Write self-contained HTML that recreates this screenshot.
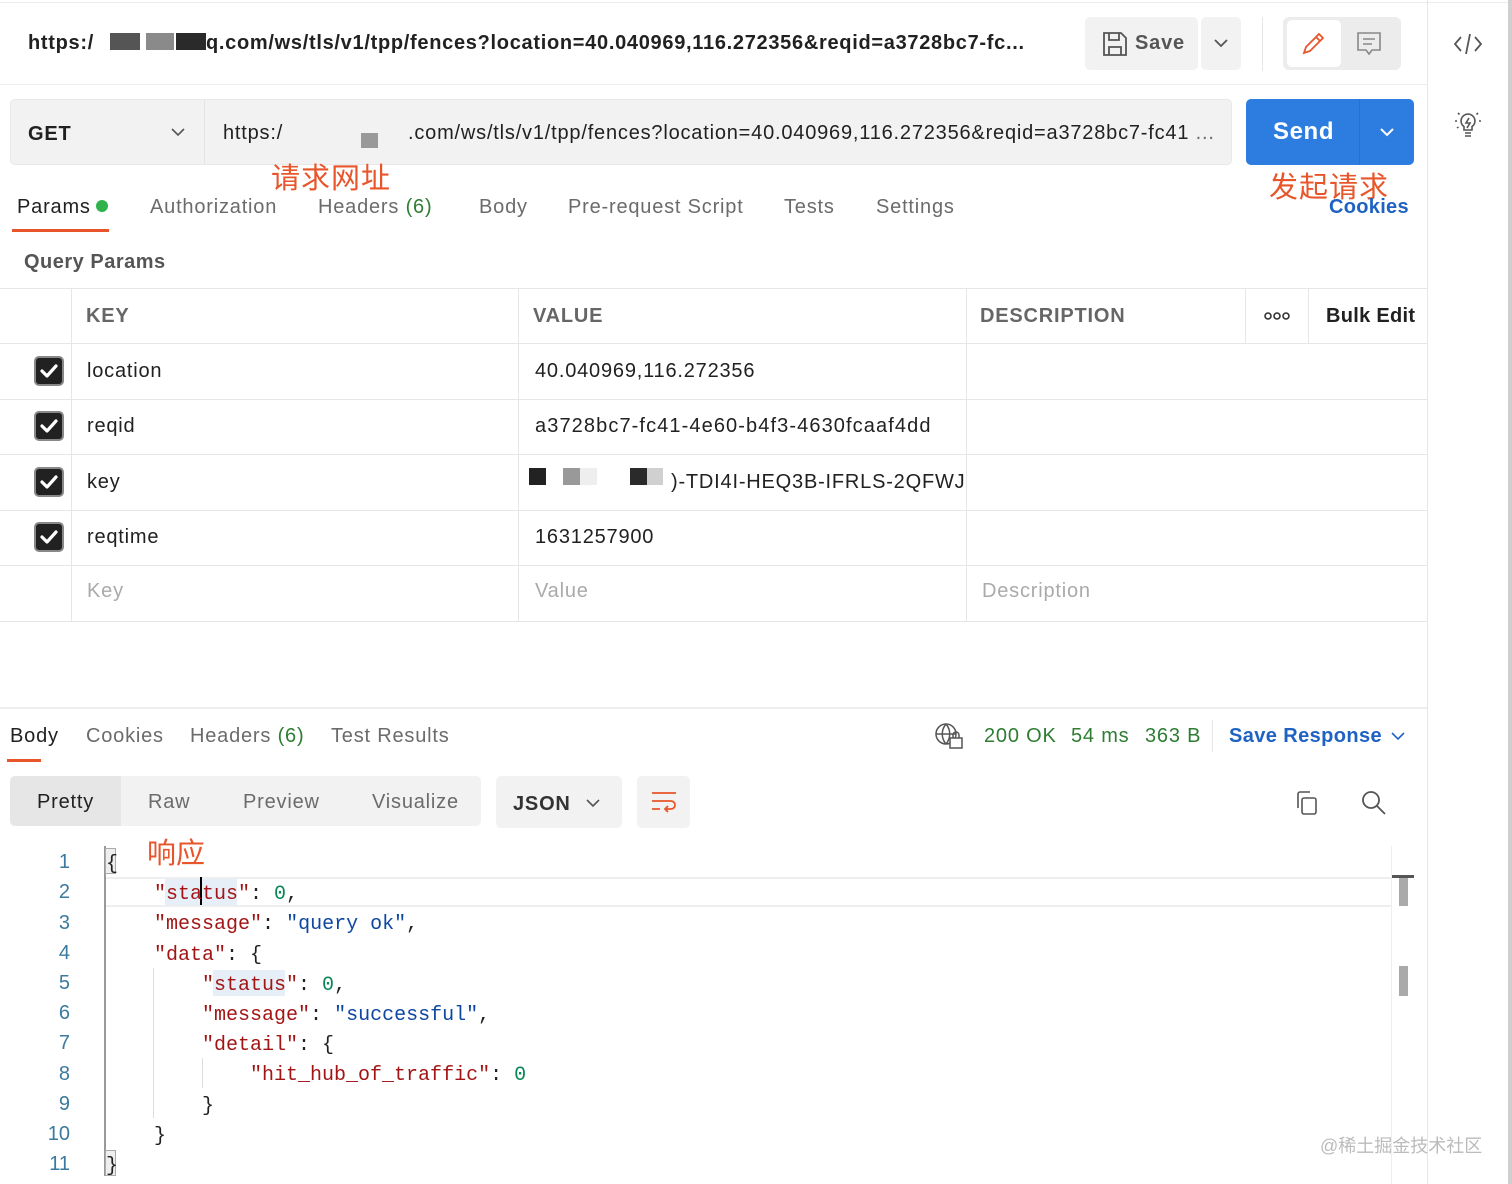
<!DOCTYPE html>
<html><head><meta charset="utf-8">
<style>
*{box-sizing:border-box;margin:0;padding:0}
body{width:1512px;height:1184px;background:#fff;font-family:"Liberation Sans","Noto Sans CJK SC",sans-serif;color:#212121;position:relative;overflow:hidden}
.a{position:absolute}
.t{font-size:20px;white-space:nowrap;letter-spacing:0.8px}
.g{color:#6b6b6b}
.cjk{font-family:"Noto Sans CJK SC","WenQuanYi Zen Hei",sans-serif;color:#e8552a;font-size:29px}
.vl{position:absolute;background:#e6e6e6;width:1px}
.hz{position:absolute;background:#e6e6e6;height:1px}
.cb{position:absolute;left:34px;width:30px;height:30px;border-radius:5px;background:#212121;border:2px solid #888}
.code{font-family:"Liberation Mono",monospace;font-size:20px;white-space:pre}
.k{color:#a31515}.s{color:#0d47a1}.n{color:#098658}
.ln{position:absolute;width:70px;text-align:right;color:#3b7a9e;font-size:20px;left:0}
</style></head><body>
<div class="hz" style="top:2px;left:0;width:1508px;background:#ececec"></div>
<div class="a" style="left:1508px;top:0;width:4px;height:1184px;background:#cfcfcf"></div>
<div class="vl" style="left:1427px;top:0;height:1184px"></div>
<svg class="a" style="left:1453px;top:31px" width="30" height="26" viewBox="0 0 30 26" fill="none" stroke="#555" stroke-width="1.8"><path d="M8 6 2 13l6 7M22 6l6 7-6 7M17 3l-4 20"/></svg>
<svg class="a" style="left:1452px;top:108px" width="32" height="32" viewBox="0 0 32 32" fill="none" stroke="#555" stroke-width="1.6"><path d="M16 6a7 7 0 0 0-4 12.7V22h8v-3.3A7 7 0 0 0 16 6zM13 25h6M13 28h6M17 10l-3 5h4l-3 5M3 13h2M27 13h2M6 5l1.5 1.5M26 5l-1.5 1.5M5 20l1.5-1"/></svg>

<div class="a t" style="left:28px;top:32px;font-weight:bold;letter-spacing:0.7px">https:/</div>
<div class="a" style="left:110px;top:33px;width:30px;height:17px;background:#555"></div>
<div class="a" style="left:146px;top:33px;width:28px;height:17px;background:#8a8a8a"></div>
<div class="a" style="left:176px;top:33px;width:30px;height:17px;background:#2a2a2a"></div>
<div class="a t" style="left:206px;top:32px;font-weight:bold;letter-spacing:0.7px">q.com/ws/tls/v1/tpp/fences?location=40.040969,116.272356&amp;reqid=a3728bc7-fc...</div>
<div class="a" style="left:1085px;top:17px;width:113px;height:53px;background:#f2f2f2;border-radius:5px"></div>
<div class="a" style="left:1201px;top:17px;width:40px;height:53px;background:#f2f2f2;border-radius:5px"></div>
<svg class="a" style="left:1102px;top:31px" width="26" height="26" viewBox="0 0 26 26" fill="none" stroke="#555" stroke-width="1.8"><path d="M2 2h17l5 5v17H2z M7 2v7h10V2 M7 24v-8h12v8"/></svg>
<div class="a t" style="left:1135px;top:32px;font-weight:bold;color:#555">Save</div>
<svg class="a" style="left:1213px;top:38px" width="16" height="10" viewBox="0 0 16 10" fill="none" stroke="#555" stroke-width="1.8"><path d="M2 2l6 6 6-6"/></svg>
<div class="vl" style="left:1262px;top:17px;height:54px"></div>
<div class="a" style="left:1283px;top:17px;width:118px;height:53px;background:#ececec;border-radius:6px"></div>
<div class="a" style="left:1287px;top:20px;width:54px;height:47px;background:#fff;border-radius:5px"></div>
<svg class="a" style="left:1301px;top:30px" width="26" height="26" viewBox="0 0 26 26" fill="none" stroke="#e8552a" stroke-width="1.8"><path d="M3 23l2-6L18 4l4 4L9 21z M15 7l4 4"/></svg>
<svg class="a" style="left:1356px;top:31px" width="26" height="26" viewBox="0 0 26 26" fill="none" stroke="#888" stroke-width="1.6"><path d="M2 2h22v17H16l-3 4-3-4H2z M7 8h12M7 13h9"/></svg>
<div class="hz" style="top:84px;left:0;width:1427px;background:#ededed"></div>

<div class="a" style="left:10px;top:99px;width:1222px;height:66px;background:#f2f2f2;border-radius:5px;border:1px solid #e8e8e8"></div>
<div class="vl" style="left:204px;top:100px;height:64px;background:#e3e3e3"></div>
<div class="a t" style="left:28px;top:123px;font-weight:bold">GET</div>
<svg class="a" style="left:170px;top:127px" width="16" height="10" viewBox="0 0 16 10" fill="none" stroke="#555" stroke-width="1.6"><path d="M2 2l6 6 6-6"/></svg>
<div class="a t" style="left:223px;top:122px">https:/</div>
<div class="a" style="left:361px;top:133px;width:17px;height:15px;background:#999"></div>
<div class="a t" style="left:408px;top:122px">.com/ws/tls/v1/tpp/fences?location=40.040969,116.272356&amp;reqid=a3728bc7-fc41 <span class="g">...</span></div>
<div class="a" style="left:1246px;top:99px;width:168px;height:66px;background:#2d7ce0;border-radius:5px"></div>
<div class="a" style="left:1359px;top:99px;width:1px;height:66px;background:#2a6fca"></div>
<div class="a" style="left:1273px;top:118px;color:#fff;font-weight:bold;font-size:24px;letter-spacing:0.6px">Send</div>
<svg class="a" style="left:1379px;top:127px" width="16" height="10" viewBox="0 0 16 10" fill="none" stroke="#fff" stroke-width="2"><path d="M2 2l6 6 6-6"/></svg>
<div class="a cjk" style="left:271px;top:155px;letter-spacing:1px">请求网址</div>
<div class="a cjk" style="left:1269px;top:164px;letter-spacing:1px">发起请求</div>
<div class="a t" style="left:1329px;top:196px;color:#1e63c4;font-weight:bold;letter-spacing:0.3px">Cookies</div>

<div class="a t" style="left:17px;top:196px">Params</div>
<div class="a" style="left:96px;top:200px;width:12px;height:12px;border-radius:6px;background:#2fb24c"></div>
<div class="a" style="left:12px;top:229px;width:97px;height:3px;background:#e8552a"></div>
<div class="a t g" style="left:150px;top:196px">Authorization</div>
<div class="a t g" style="left:318px;top:196px">Headers <span style="color:#2e7d32">(6)</span></div>
<div class="a t g" style="left:479px;top:196px">Body</div>
<div class="a t g" style="left:568px;top:196px">Pre-request Script</div>
<div class="a t g" style="left:784px;top:196px">Tests</div>
<div class="a t g" style="left:876px;top:196px">Settings</div>
<div class="a t" style="left:24px;top:251px;font-weight:bold;color:#555;letter-spacing:0.5px">Query Params</div>

<div class="hz" style="top:288px;left:0;width:1427px"></div>
<div class="hz" style="top:343px;left:0;width:1427px"></div>
<div class="hz" style="top:399px;left:0;width:1427px"></div>
<div class="hz" style="top:454px;left:0;width:1427px"></div>
<div class="hz" style="top:510px;left:0;width:1427px"></div>
<div class="hz" style="top:565px;left:0;width:1427px"></div>
<div class="hz" style="top:621px;left:0;width:1427px"></div>
<div class="vl" style="left:71px;top:288px;height:333px"></div>
<div class="vl" style="left:518px;top:288px;height:333px"></div>
<div class="vl" style="left:966px;top:288px;height:333px"></div>
<div class="vl" style="left:1245px;top:288px;height:55px"></div>
<div class="vl" style="left:1308px;top:288px;height:55px"></div>
<div class="a t" style="left:86px;top:305px;font-weight:bold;color:#666">KEY</div>
<div class="a t" style="left:533px;top:305px;font-weight:bold;color:#666">VALUE</div>
<div class="a t" style="left:980px;top:305px;font-weight:bold;color:#666">DESCRIPTION</div>
<svg class="a" style="left:1264px;top:311px" width="26" height="10" viewBox="0 0 26 10" fill="none" stroke="#333" stroke-width="1.6"><circle cx="4" cy="5" r="3"/><circle cx="13" cy="5" r="3"/><circle cx="22" cy="5" r="3"/></svg>
<div class="a t" style="left:1326px;top:305px;font-weight:bold;letter-spacing:0.3px">Bulk Edit</div>

<div class="cb" style="top:356px"></div><div class="cb" style="top:411px"></div><div class="cb" style="top:467px"></div><div class="cb" style="top:522px"></div>
<svg class="a" style="left:34px;top:356px" width="30" height="200" viewBox="0 0 30 200" fill="none" stroke="#fff" stroke-width="3.2" stroke-linecap="round" stroke-linejoin="round"><path d="M8 15l5 5 9-10M8 70l5 5 9-10M8 126l5 5 9-10M8 181l5 5 9-10"/></svg>

<div class="a t" style="left:87px;top:360px">location</div>
<div class="a t" style="left:535px;top:360px">40.040969,116.272356</div>
<div class="a t" style="left:87px;top:415px">reqid</div>
<div class="a t" style="left:535px;top:415px;letter-spacing:1.1px">a3728bc7-fc41-4e60-b4f3-4630fcaaf4dd</div>
<div class="a t" style="left:87px;top:471px">key</div>
<div class="a" style="left:529px;top:468px;width:17px;height:17px;background:#222"></div>
<div class="a" style="left:563px;top:468px;width:17px;height:17px;background:#999"></div>
<div class="a" style="left:580px;top:468px;width:17px;height:17px;background:#eee"></div>
<div class="a" style="left:630px;top:468px;width:17px;height:17px;background:#2a2a2a"></div>
<div class="a" style="left:647px;top:468px;width:16px;height:17px;background:#d0d0d0"></div>
<div class="a t" style="left:671px;top:471px">)-TDI4I-HEQ3B-IFRLS-2QFWJ</div>
<div class="a t" style="left:87px;top:526px">reqtime</div>
<div class="a t" style="left:535px;top:526px">1631257900</div>
<div class="a t" style="left:87px;top:580px;color:#aaa">Key</div>
<div class="a t" style="left:535px;top:580px;color:#aaa">Value</div>
<div class="a t" style="left:982px;top:580px;color:#aaa">Description</div>

<div class="hz" style="top:707px;left:0;width:1427px;height:2px;background:#eee"></div>
<div class="a t" style="left:10px;top:725px">Body</div>
<div class="a" style="left:7px;top:759px;width:34px;height:3px;background:#e8552a"></div>
<div class="a t g" style="left:86px;top:725px">Cookies</div>
<div class="a t g" style="left:190px;top:725px">Headers <span style="color:#2e7d32">(6)</span></div>
<div class="a t g" style="left:331px;top:725px">Test Results</div>
<svg class="a" style="left:934px;top:722px" width="30" height="28" viewBox="0 0 30 28" fill="none" stroke="#555" stroke-width="1.5"><circle cx="12" cy="12" r="10"/><path d="M2 12h20M12 2c-5 6-5 14 0 20M12 2c5 6 5 14 0 20"/><rect x="16" y="16" width="12" height="10" fill="#fff"/><path d="M19 16v-3a3 3 0 0 1 6 0v3"/></svg>
<div class="a t" style="left:984px;top:725px;color:#2e7d32">200 OK</div>
<div class="a t" style="left:1071px;top:725px;color:#2e7d32">54 ms</div>
<div class="a t" style="left:1145px;top:725px;color:#2e7d32">363 B</div>
<div class="vl" style="left:1212px;top:720px;height:32px"></div>
<div class="a t" style="left:1229px;top:725px;color:#1e63c4;font-weight:bold;letter-spacing:0.4px">Save Response</div>
<svg class="a" style="left:1390px;top:731px" width="16" height="10" viewBox="0 0 16 10" fill="none" stroke="#1e63c4" stroke-width="1.6"><path d="M2 2l6 6 6-6"/></svg>

<div class="a" style="left:10px;top:776px;width:471px;height:50px;background:#f2f2f2;border-radius:5px"></div>
<div class="a" style="left:10px;top:776px;width:111px;height:50px;background:#e6e6e6;border-radius:5px 0 0 5px"></div>
<div class="a t" style="left:37px;top:791px">Pretty</div>
<div class="a t g" style="left:148px;top:791px">Raw</div>
<div class="a t g" style="left:243px;top:791px">Preview</div>
<div class="a t g" style="left:372px;top:791px">Visualize</div>
<div class="a" style="left:496px;top:776px;width:126px;height:52px;background:#f2f2f2;border-radius:5px"></div>
<div class="a t" style="left:513px;top:793px;font-weight:bold;color:#333">JSON</div>
<svg class="a" style="left:585px;top:798px" width="16" height="10" viewBox="0 0 16 10" fill="none" stroke="#555" stroke-width="1.6"><path d="M2 2l6 6 6-6"/></svg>
<div class="a" style="left:637px;top:776px;width:53px;height:52px;background:#f2f2f2;border-radius:5px"></div>
<svg class="a" style="left:650px;top:790px" width="28" height="26" viewBox="0 0 28 26" fill="none" stroke="#e8552a" stroke-width="1.8"><path d="M2 3h24M2 11h19a4 4 0 0 1 0 8h-6M18 16l-3 3 3 3M2 19h8"/></svg>
<svg class="a" style="left:1293px;top:789px" width="28" height="28" viewBox="0 0 28 28" fill="none" stroke="#555" stroke-width="1.6"><rect x="9" y="9" width="14" height="16" rx="2"/><path d="M5 19V5a2 2 0 0 1 2-2h10"/></svg>
<svg class="a" style="left:1360px;top:789px" width="28" height="28" viewBox="0 0 28 28" fill="none" stroke="#555" stroke-width="1.8"><circle cx="11" cy="11" r="8"/><path d="M17 17l8 8"/></svg>
<div class="a cjk" style="left:147px;top:830px">响应</div>

<div class="vl" style="left:1391px;top:846px;height:338px;background:#eee"></div>
<div class="a" style="left:1392px;top:875px;width:22px;height:3px;background:#555"></div>
<div class="a" style="left:1399px;top:878px;width:9px;height:28px;background:#aaa"></div>
<div class="a" style="left:1399px;top:966px;width:9px;height:30px;background:#aaa"></div>
<div class="a" style="left:106px;top:877px;width:1285px;height:30px;border-top:2px solid #eee;border-bottom:2px solid #eee"></div>
<div class="vl" style="left:104px;top:846px;height:330px;background:#999;width:2px"></div>
<div class="vl" style="left:153px;top:968px;height:150px;background:#ddd"></div>
<div class="vl" style="left:202px;top:1058px;height:30px;background:#ddd"></div>
<div class="a" style="left:105px;top:848px;width:11px;height:26px;border:1px solid #aaa;background:#eee"></div>
<div class="a" style="left:105px;top:1150px;width:11px;height:26px;border:1px solid #aaa;background:#eee"></div>
<div class="a" style="left:165px;top:879px;width:72px;height:26px;background:#e6eef8"></div>
<div class="a" style="left:213px;top:970px;width:72px;height:26px;background:#e6eef8"></div>
<div class="a" style="left:200px;top:877px;width:2px;height:28px;background:#000"></div>
<div class="ln" style="top:851px">1</div><div class="ln" style="top:881px">2</div><div class="ln" style="top:912px">3</div><div class="ln" style="top:942px">4</div><div class="ln" style="top:972px">5</div><div class="ln" style="top:1002px">6</div><div class="ln" style="top:1032px">7</div><div class="ln" style="top:1063px">8</div><div class="ln" style="top:1093px">9</div><div class="ln" style="top:1123px">10</div><div class="ln" style="top:1153px">11</div>
<div class="a code" style="left:106px;top:850px;line-height:30.2px">{
    <span class="k">"status"</span>: <span class="n">0</span>,
    <span class="k">"message"</span>: <span class="s">"query ok"</span>,
    <span class="k">"data"</span>: {
        <span class="k">"status"</span>: <span class="n">0</span>,
        <span class="k">"message"</span>: <span class="s">"successful"</span>,
        <span class="k">"detail"</span>: {
            <span class="k">"hit_hub_of_traffic"</span>: <span class="n">0</span>
        }
    }
}</div>
<div class="a" style="left:1320px;top:1132px;font-size:18px;color:#bbb">@稀土掘金技术社区</div>
</body></html>
